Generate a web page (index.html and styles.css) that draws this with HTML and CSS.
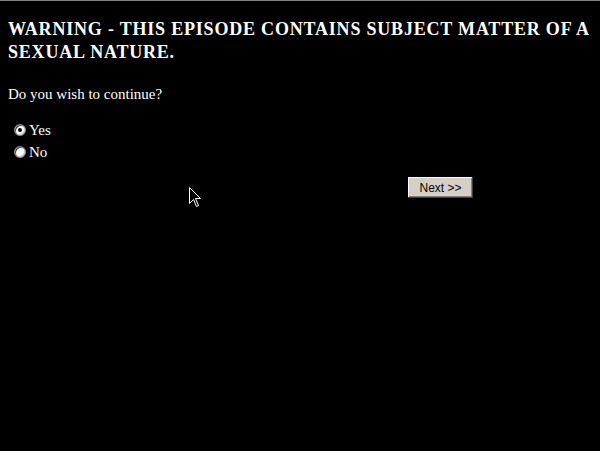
FILE: index.html
```html
<!DOCTYPE html>
<html>
<head>
<meta charset="utf-8">
<link rel="stylesheet" href="styles.css">
</head>
<body>
<div class="page">
  <h1 class="warning">WARNING - THIS EPISODE CONTAINS SUBJECT MATTER OF A SEXUAL NATURE.</h1>
  <p class="question">Do you wish to continue?</p>
  <form class="choices">
    <label class="choice choice-yes"><span class="radio checked"></span>Yes</label>
    <label class="choice choice-no"><span class="radio"></span>No</label>
    <div class="actions"><button type="button" class="next">Next &gt;&gt;</button></div>
  </form>
</div>
<svg class="cursor" width="13" height="21" viewBox="0 0 13 21"><path d="M0.5 0.5 L0.5 16.5 L4.5 12.5 L7.5 19.5 L9.5 18.5 L6.5 11.5 L11.5 11.5 Z" fill="#000" stroke="#fff" stroke-width="1"/></svg>
</body>
</html>
```
FILE: styles.css
```css
html, body {
  margin: 0;
  padding: 0;
  background: #000;
  height: 100%;
}
body {
  border-top: 1px solid #808080;
  box-sizing: border-box;
  font-family: "Liberation Serif", "Times New Roman", serif;
  color: #fff;
  overflow: hidden;
}
.page {
  padding: 0 8px;
}
.warning {
  font-size: 18px;
  font-weight: bold;
  letter-spacing: 0.8px;
  line-height: 23px;
  margin: 17px 0 0 0;
}
.question {
  font-size: 15px;
  line-height: 18px;
  margin: 21px 0 0 0;
}
.choices {
  margin: 16px 0 0 0;
}
.choice {
  display: flex;
  align-items: center;
  font-size: 15px;
  line-height: 22px;
  height: 22px;
}
.choice-yes { padding-left: 6px; }
.choice-no { padding-left: 6px; }
.radio {
  width: 12px;
  height: 12px;
  box-sizing: border-box;
  border-radius: 50%;
  background: #fff;
  border: 1px solid #808080;
  box-shadow: inset 1px 1px 0 #404040, inset -1px -1px 0 #d4d0c8;
  margin-right: 3px;
  position: relative;
}
.radio.checked::after {
  content: "";
  position: absolute;
  left: 3px;
  top: 3px;
  width: 4px;
  height: 4px;
  border-radius: 50%;
  background: #000;
}
.actions {
  display: flex;
  padding-left: 400px;
  margin-top: 14px;
}
.next {
  box-sizing: border-box;
  width: 65px;
  height: 21px;
  background: #d4d0c8;
  border: none;
  box-shadow: inset -1px -1px 0 #404040, inset 1px 1px 0 #fff, inset -2px -2px 0 #808080;
  font-family: "Liberation Sans", Arial, sans-serif;
  font-size: 12px;
  color: #000;
  padding: 0;
}
.cursor {
  position: absolute;
  left: 189px;
  top: 187px;
}
```
